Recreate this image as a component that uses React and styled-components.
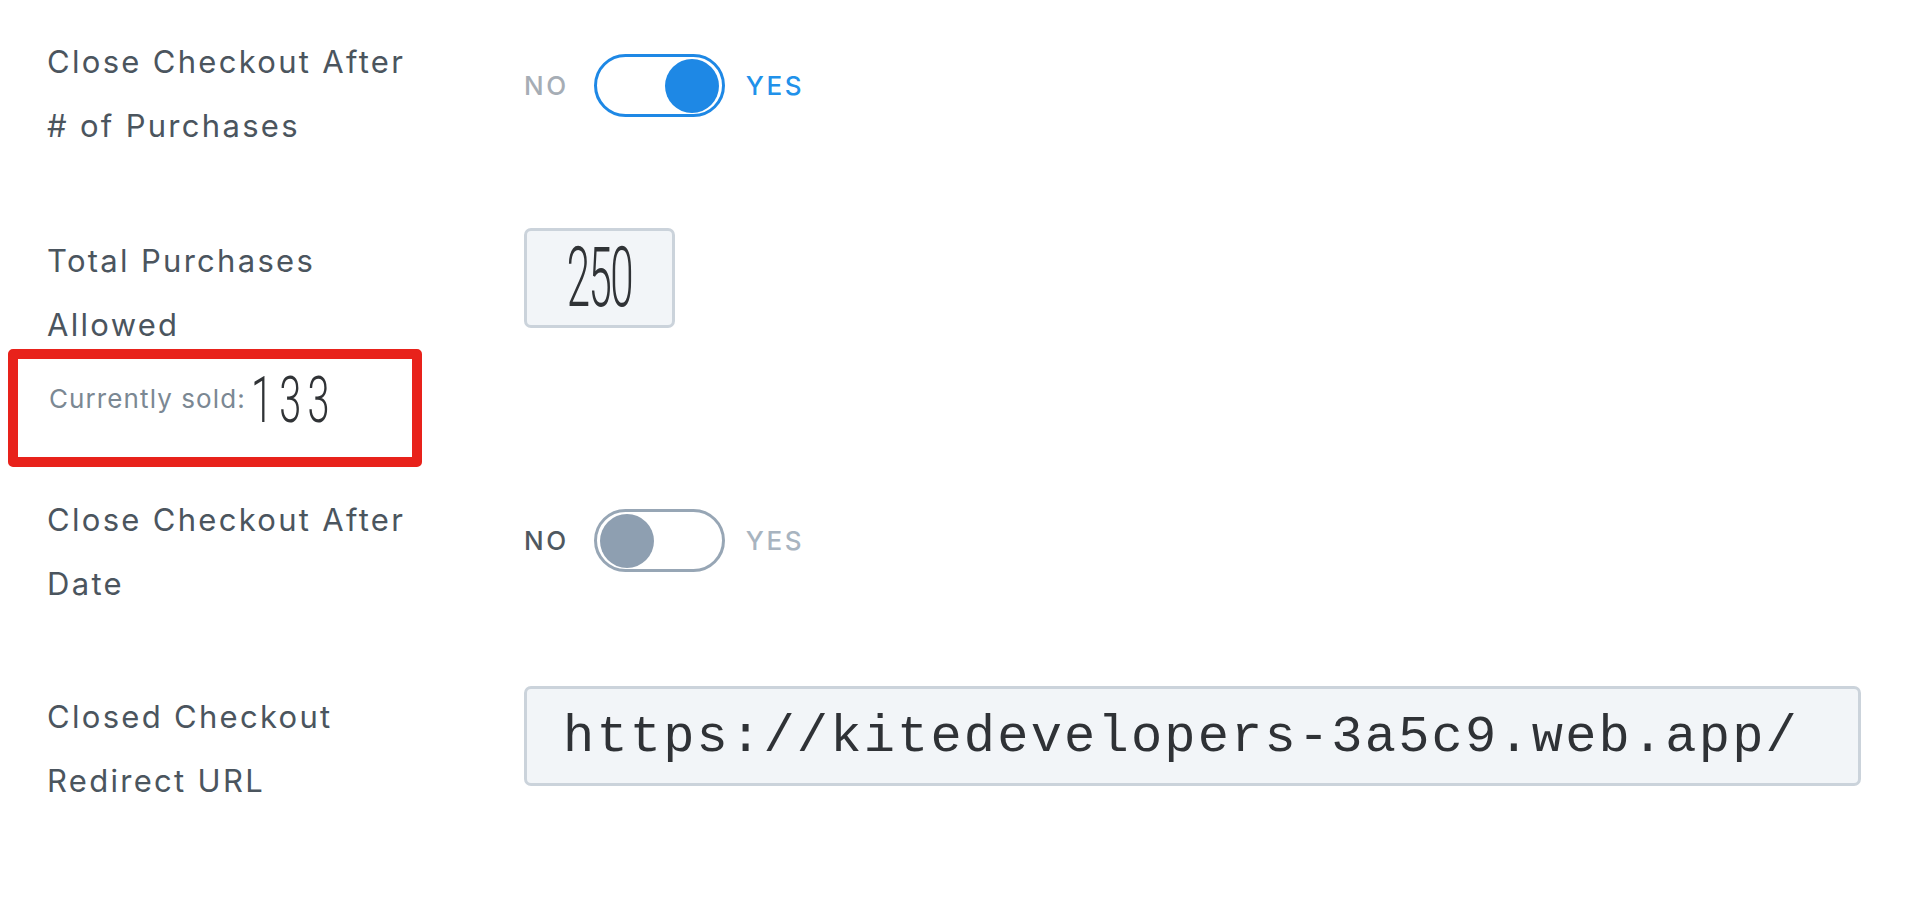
import styled, { createGlobalStyle } from 'styled-components';

const GlobalStyle = createGlobalStyle`
  html, body {
    margin: 0;
    padding: 0;
    background: #ffffff;
  }
  body {
    font-family: Inter, "Noto Sans", sans-serif;
    color: #4b555e;
  }
`;

const Page = styled.div`
  display: flex;
  flex-direction: column;
  padding: 30px 59px 0 47px;
`;

const Row = styled.div`
  display: grid;
  grid-template-columns: 477px 1fr;
  align-items: start;
  margin-bottom: ${(p) => p.gap}px;
`;

const LabelCell = styled.div`
  display: flex;
  flex-direction: column;
`;

const Label = styled.div`
  font-size: 31px;
  line-height: 64px;
  letter-spacing: 2.3px;
  white-space: nowrap;
  color: #4b555e;
`;

const SoldBox = styled.div`
  display: flex;
  align-items: center;
  box-sizing: border-box;
  width: 414px;
  height: 118px;
  margin: -8px 0 0 -39px;
  padding: 0 0 20px 31px;
  border: 10px solid #e8221b;
  border-radius: 5px;
`;

const SoldText = styled.span`
  flex-shrink: 0;
  font-size: 26px;
  color: #7b8893;
  letter-spacing: 1.1px;
  white-space: nowrap;
`;

const SoldValue = styled.span`
  display: flex;
  flex-shrink: 0;
  width: 90px;
  margin: 6px 0 0 5px;
`;

const Digits = styled.span`
  display: inline-block;
  font-family: Roboto, "DejaVu Sans", sans-serif;
  font-weight: 300;
  font-size: ${(p) => p.size}px;
  letter-spacing: ${(p) => p.spacing}px;
  line-height: 1;
  white-space: nowrap;
  color: #303336;
  transform: scaleX(${(p) => p.squeeze});
  transform-origin: ${(p) => p.origin};
`;

const Toggle = styled.div`
  display: flex;
  align-items: center;
  margin-top: ${(p) => p.offset}px;
`;

const ToggleText = styled.span`
  font-size: 26px;
  letter-spacing: 2.6px;
  font-weight: 500;
  color: ${(p) => p.color};
`;

const Track = styled.div`
  display: flex;
  align-items: center;
  justify-content: ${(p) => (p.on ? 'flex-end' : 'flex-start')};
  box-sizing: border-box;
  width: 131px;
  height: 63px;
  margin: 0 21px 0 25px;
  padding: 0 3px;
  border: 3px solid ${(p) => (p.on ? '#1e88e5' : '#97a6b5')};
  border-radius: 32px;
  background: #ffffff;
`;

const Knob = styled.div`
  width: 54px;
  height: 54px;
  border-radius: 50%;
  background: ${(p) => (p.on ? '#1e88e5' : '#8e9fb1')};
`;

const NumberBox = styled.div`
  display: flex;
  align-items: center;
  justify-content: center;
  box-sizing: border-box;
  width: 151px;
  height: 100px;
  margin-top: -1px;
  border: 3px solid #cbd3db;
  border-radius: 7px;
  background: #f2f5f8;
  overflow: hidden;
`;

const UrlBox = styled.div`
  display: flex;
  align-items: center;
  box-sizing: border-box;
  height: 100px;
  margin-top: 1px;
  padding: 2px 0 0 36px;
  border: 3px solid #cbd3db;
  border-radius: 7px;
  background: #f2f5f8;
  font-family: "Courier New", "Nimbus Mono PS", "FreeMono", "Liberation Mono", monospace;
  font-size: 52px;
  letter-spacing: 2.2px;
  color: #2f3236;
  white-space: nowrap;
  overflow: hidden;
`;

const Switch = ({ on, offset }) => (
  <Toggle offset={offset}>
    <ToggleText color={on ? '#a6adb5' : '#4f5860'}>NO</ToggleText>
    <Track on={on}>
      <Knob on={on} />
    </Track>
    <ToggleText color={on ? '#2191ea' : '#a8b4c0'}>YES</ToggleText>
  </Toggle>
);

const App = () => (
  <>
    <GlobalStyle />
    <Page>
      <Row gap={71}>
        <LabelCell>
          <Label>Close Checkout After</Label>
          <Label># of Purchases</Label>
        </LabelCell>
        <Switch on offset={24} />
      </Row>
      <Row gap={21}>
        <LabelCell>
          <Label>Total Purchases</Label>
          <Label>Allowed</Label>
          <SoldBox>
            <SoldText>Currently sold:</SoldText>
            <SoldValue>
              <Digits size={64} spacing={10} squeeze={0.62} origin="left center">
                133
              </Digits>
            </SoldValue>
          </SoldBox>
        </LabelCell>
        <NumberBox>
          <Digits size={84} spacing={-3} squeeze={0.5} origin="center">
            250
          </Digits>
        </NumberBox>
      </Row>
      <Row gap={69}>
        <LabelCell>
          <Label>Close Checkout After</Label>
          <Label>Date</Label>
        </LabelCell>
        <Switch on={false} offset={21} />
      </Row>
      <Row gap={0}>
        <LabelCell>
          <Label>Closed Checkout</Label>
          <Label>Redirect URL</Label>
        </LabelCell>
        <UrlBox>https://kitedevelopers-3a5c9.web.app/</UrlBox>
      </Row>
    </Page>
  </>
);

export default App;
